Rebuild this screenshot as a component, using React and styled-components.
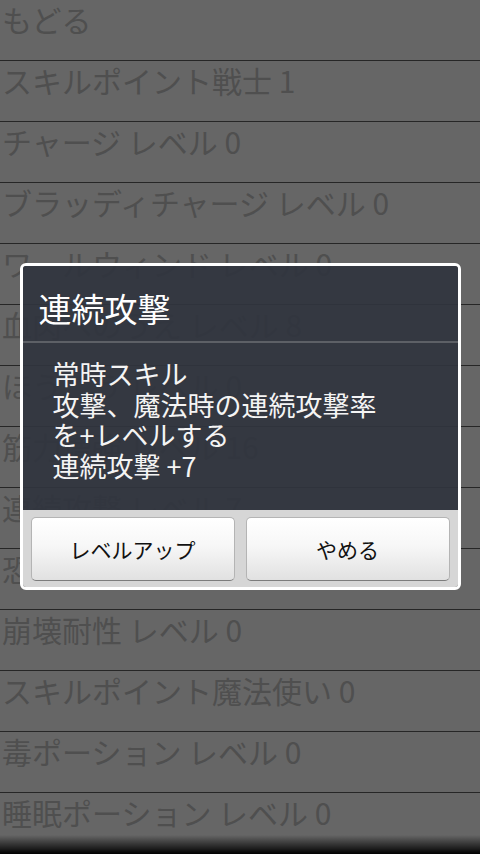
import React from 'react'
import styled, { createGlobalStyle } from 'styled-components'

const GlobalStyle = createGlobalStyle`
    html, body {
        margin: 0;
        padding: 0;
        background: #666666;
    }
    body {
        font-family: "Noto Sans CJK JP", "Noto Sans", sans-serif;
    }
`;

const Screen = styled.div`
    position: relative;
    width: 480px;
    height: 854px;
    overflow: hidden;
    background-color: #666666;

    &::after {
        content: '';
        position: absolute;
        left: 0;
        right: 0;
        bottom: 0;
        height: 19px;
        background: linear-gradient(rgba(0, 0, 0, 0), #000000);
    }
`;

const List = styled.ul`
    list-style: none;
    margin: 0;
    padding: 0;
`;

const Row = styled.li`
    height: 60px;
    padding: 1px 0 0 2px;
    box-sizing: border-box;
    border-top: ${props => props.first ? 'none' : '1px solid #262626'};
    height: ${props => props.first ? '60px' : '61px'};
    color: #4f4f4f;
    font-size: 30px;
    line-height: 36px;
    white-space: nowrap;
`;

const Backdrop = styled.div`
    position: absolute;
    inset: 0;
    display: flex;
    justify-content: center;
    align-items: flex-start;
    padding-top: 263px;
`;

const Dialog = styled.div`
    width: 441px;
    box-sizing: border-box;
    border: 3px solid #ffffff;
    border-radius: 6px;
    overflow: hidden;
    display: flex;
    flex-direction: column;
`;

const Title = styled.div`
    background-color: rgba(48, 52, 62, 0.92);
    color: #ffffff;
    font-size: 33px;
    line-height: 40px;
    padding: 22px 16px 13px;
    border-bottom: 2px solid #5d6066;
`;

const Body = styled.div`
    background-color: rgba(48, 52, 62, 0.92);
    color: #f4f4f4;
    font-size: 27px;
    line-height: 30.5px;
    padding: 16px 30px 29px;
`;

const Line = styled.div`
    white-space: nowrap;
`;

const ButtonBar = styled.div`
    background-color: #d6d6d6;
    display: flex;
    gap: 11px;
    padding: 7px 8px 6px;
`;

const Button = styled.button`
    flex: 1;
    height: 64px;
    border: 1px solid #b4b4b4;
    border-bottom-color: #7c7c7c;
    border-radius: 5px;
    background: linear-gradient(#ffffff 0%, #f7f7f7 45%, #e1e1e1 100%);
    font-family: "Noto Sans CJK JP", sans-serif;
    font-size: 21px;
    color: #111111;
    padding: 0;
`;

const items = [
    'もどる',
    'スキルポイント戦士 1',
    'チャージ レベル 0',
    'ブラッディチャージ レベル 0',
    'ワールウィンド レベル 0',
    '血肉へのうえ レベル 8',
    'ほうこう レベル 0',
    '筋力増強 レベル 16',
    '連続攻撃 レベル 7',
    '恐怖耐性 レベル 0',
    '崩壊耐性 レベル 0',
    'スキルポイント魔法使い 0',
    '毒ポーション レベル 0',
    '睡眠ポーション レベル 0',
]

const description = [
    '常時スキル',
    '攻撃、魔法時の連続攻撃率',
    'を+レベルする',
    '連続攻撃 +7',
]

export default function App() {
    return (
        <Screen>
            <GlobalStyle />
            <List>
                {items.map((item, i) => (
                    <Row key={i} first={i === 0}>{item}</Row>
                ))}
            </List>
            <Backdrop>
                <Dialog>
                    <Title>連続攻撃</Title>
                    <Body>
                        {description.map((line, i) => (
                            <Line key={i}>{line}</Line>
                        ))}
                    </Body>
                    <ButtonBar>
                        <Button>レベルアップ</Button>
                        <Button>やめる</Button>
                    </ButtonBar>
                </Dialog>
            </Backdrop>
        </Screen>
    )
}
